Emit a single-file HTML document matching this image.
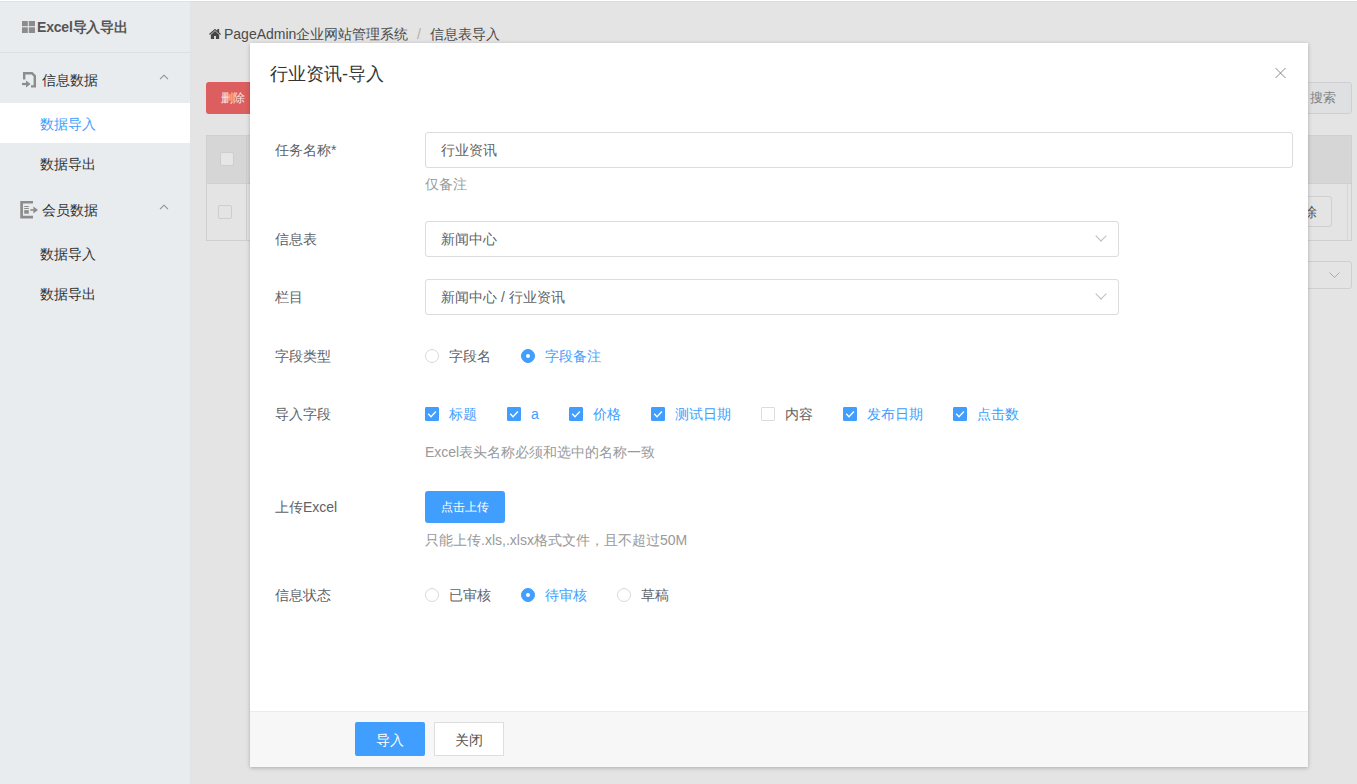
<!DOCTYPE html>
<html><head><meta charset="utf-8">
<style>
*{box-sizing:border-box;margin:0;padding:0}
html,body{width:1357px;height:784px;overflow:hidden}
body{font-family:"Liberation Sans",sans-serif;font-size:14px;color:#606266;background:#e4e4e4;position:relative}
.abs{position:absolute}
.t{position:absolute;white-space:nowrap;line-height:14px}
#topline{left:0;top:0;width:1357px;height:1px;background:#fff;z-index:5}
#side{left:0;top:0;width:191px;height:784px;background:#e8ecef;border-right:1px solid #e1e4e6}
#side .sep{left:0;top:52px;width:191px;height:1px;background:#dcdfe4}
#side .act{left:0;top:103px;width:190px;height:40px;background:#fff}
#side .t{color:#333}
#main{left:191px;top:0;width:1166px;height:784px;background:#e4e4e4}
#main .t{color:#4a4a4a}
#modal{left:250px;top:43px;width:1058px;height:724px;background:#fff;box-shadow:0 1px 4px rgba(0,0,0,.25)}
.lab{position:absolute;left:25px;white-space:nowrap;line-height:14px;color:#606266}
.inp{position:absolute;left:175px;border:1px solid #dcdcdc;border-radius:3px;background:#fff}
.inp .v{position:absolute;left:15px;top:10px;line-height:14px;white-space:nowrap;color:#606266}
.chev{position:absolute;right:13px;top:10px;width:8px;height:8px;border-right:1px solid #bdbdbd;border-bottom:1px solid #bdbdbd;transform:rotate(45deg)}
.help{position:absolute;left:175px;white-space:nowrap;line-height:14px;color:#999}
.row{position:absolute;left:175px;height:14px;display:flex;align-items:center;white-space:nowrap}
.radio{position:relative;flex:none;width:14px;height:14px;border:1px solid #d9d9d9;border-radius:50%;background:#fff}
.radio.on{border-color:#409eff;background:#409eff}
.radio.on:after{content:"";position:absolute;left:4px;top:4px;width:4px;height:4px;border-radius:50%;background:#fff}
.cb{position:relative;flex:none;width:14px;height:14px;border:1px solid #dcdcdc;border-radius:1px;background:#fff}
.cb.on{border-color:#409eff;background:#409eff}
.cb svg{position:absolute;left:0;top:0}
.opt{padding-left:10px;margin-right:30px;line-height:14px;color:#606266}
.opt.blue{color:#409eff}
#footer{left:0;top:668px;width:1058px;height:56px;background:#f7f7f7;border-top:1px solid #ebebeb}
.btn{position:absolute;text-align:center;white-space:nowrap}
</style></head><body>
<div id="topline" class="abs"></div>
<div class="abs" style="left:0;top:1px;width:1357px;height:1px;background:rgba(0,0,0,.035);z-index:5"></div>
<div id="side" class="abs">
  <div class="sep abs"></div>
  <div class="act abs"></div>
  <!-- grid icon -->
  <svg class="abs" style="left:22px;top:21px" width="13" height="12" viewBox="0 0 13 12"><g fill="#8c8c8c"><rect x="0" y="0" width="5.8" height="5.2"/><rect x="6.8" y="0" width="6.2" height="5.2"/><rect x="0" y="6.3" width="5.8" height="5.7"/><rect x="6.8" y="6.3" width="6.2" height="5.7"/></g></svg>
  <div class="t" style="left:37px;top:20px;font-weight:bold;color:#555;letter-spacing:-0.2px">Excel导入导出</div>
  <!-- import icon -->
  <svg class="abs" style="left:15px;top:65px" width="30" height="30" viewBox="0 0 30 30"><path d="M9.2 14.5V8.2H17L19.8 11V21.4H16" fill="none" stroke="#8c8c8c" stroke-width="2.4"/><path d="M7 19H12" stroke="#8c8c8c" stroke-width="2.2"/><path d="M11 15.6L15.6 19L11 22.4z" fill="#8c8c8c"/></svg>
  <div class="t" style="left:42px;top:73px">信息数据</div>
  <svg class="abs" style="left:159px;top:74px" width="10" height="6" viewBox="0 0 10 6"><path d="M1 5.2L5 1.2L9 5.2" fill="none" stroke="#8f8f8f" stroke-width="1.1"/></svg>
  <div class="t" style="left:40px;top:117px;color:#409eff">数据导入</div>
  <div class="t" style="left:40px;top:157px">数据导出</div>
  <!-- export icon -->
  <svg class="abs" style="left:15px;top:195px" width="30" height="30" viewBox="0 0 30 30"><path d="M18 7.25H6.6V22.2H18" fill="none" stroke="#8c8c8c" stroke-width="2.7"/><g fill="#8c8c8c"><rect x="9.2" y="11" width="4.6" height="1"/><rect x="9.2" y="13" width="4.6" height="1"/><rect x="9.2" y="15.1" width="4.6" height="3.6"/><rect x="15.3" y="14.2" width="3.5" height="1.6"/><path d="M18.4 11.5L23 15L18.4 18.5z"/></g></svg>
  <div class="t" style="left:42px;top:203px">会员数据</div>
  <svg class="abs" style="left:159px;top:204px" width="10" height="6" viewBox="0 0 10 6"><path d="M1 5.2L5 1.2L9 5.2" fill="none" stroke="#8f8f8f" stroke-width="1.1"/></svg>
  <div class="t" style="left:40px;top:247px">数据导入</div>
  <div class="t" style="left:40px;top:287px">数据导出</div>
</div>

<div id="main" class="abs">
  <!-- home icon -->
  <svg class="abs" style="left:18px;top:29px" width="12" height="10" viewBox="0 29 1664 1283" preserveAspectRatio="none"><path d="M1408 768v480q0 26-19 45t-45 19H960V928H704v384H320q-26 0-45-19t-19-45V768q0-1 .5-3t.5-3l575-474 575 474q1 2 1 6zm223-69-62 74q-8 9-21 11h-3q-13 0-21-7L832 200 140 777q-12 8-24 7-13-2-21-11l-62-74q-8-10-7-23.5T37 654L756 55q32-26 76-26t76 26l244 204V64q0-14 9-23t23-9h192q14 0 23 9t9 23v408l219 182q10 8 11 21.5t-7 23.5z" fill="#454545"/></svg>
  <div class="t" style="left:33px;top:27px">PageAdmin企业网站管理系统</div>
  <div class="t" style="left:226px;top:27px;color:#b0b0b0">/</div>
  <div class="t" style="left:239px;top:27px">信息表导入</div>
  <!-- red button -->
  <div class="abs" style="left:15px;top:82px;width:70px;height:32px;background:#dc5e5e;border-radius:3px"></div>
  <div class="t" style="left:30px;top:92px;font-size:12px;line-height:12px;color:#fbe9e9">删除</div>
  <!-- search button -->
  <div class="abs" style="left:1089px;top:82px;width:72px;height:32px;background:#dfe0e2;border:1px solid #cfcfd2;border-radius:3px"></div>
  <div class="t" style="left:1119px;top:91px;font-size:13px;line-height:14px;color:#808080">搜索</div>
  <!-- table -->
  <div class="abs" style="left:15px;top:135px;width:1146px;height:106px;border:1px solid #cfcfcf;background:#e4e4e4"></div>
  <div class="abs" style="left:16px;top:136px;width:1144px;height:48px;background:#d6d6d6;border-bottom:1px solid #cfcfcf"></div>
  <div class="abs" style="left:55px;top:135px;width:1px;height:105px;background:#cfcfcf"></div>
  <div class="abs" style="left:1156px;top:135px;width:1px;height:105px;background:#d6d6d6"></div>
  <div class="abs" style="left:29px;top:152px;width:14px;height:14px;border:1px solid #cdcdcd;background:#e6e6e6;border-radius:2px"></div>
  <div class="abs" style="left:27px;top:205px;width:14px;height:14px;border:1px solid #cdcdcd;background:#e4e4e4;border-radius:2px"></div>
  <div class="abs" style="left:1079px;top:196px;width:62px;height:31px;border:1px solid #cfcfcf;background:#e4e4e4;border-radius:3px"></div>
  <div class="t" style="left:1098px;top:205px;font-size:14px;line-height:14px;color:#555">删除</div>
  <!-- select -->
  <div class="abs" style="left:999px;top:261px;width:162px;height:28px;border:1px solid #cfcfcf;background:#e4e4e4;border-radius:3px"></div>
  <svg class="abs" style="left:1138px;top:272px" width="11" height="6" viewBox="0 0 11 6"><path d="M0.5 0.5l5 5 5-5" fill="none" stroke="#aaa" stroke-width="1"/></svg>
</div>

<div id="modal" class="abs">
  <div class="t" style="left:20px;top:22px;font-size:18px;line-height:18px;color:#333">行业资讯-导入</div>
  <svg class="abs" style="left:1025px;top:25px" width="11" height="10" viewBox="0 0 11 10"><path d="M0.5 0l10 10M10.5 0l-10 10" stroke="#8a8a8a" stroke-width="1"/></svg>

  <div class="lab" style="top:100px">任务名称*</div>
  <div class="inp" style="top:89px;width:868px;height:36px"><div class="v">行业资讯</div></div>
  <div class="help" style="top:134px">仅备注</div>

  <div class="lab" style="top:189px">信息表</div>
  <div class="inp" style="top:178px;width:694px;height:36px"><div class="v">新闻中心</div><div class="chev"></div></div>

  <div class="lab" style="top:247px">栏目</div>
  <div class="inp" style="top:236px;width:694px;height:36px"><div class="v">新闻中心 / 行业资讯</div><div class="chev"></div></div>

  <div class="lab" style="top:306px">字段类型</div>
  <div class="row" style="top:306px">
    <span class="radio"></span><span class="opt">字段名</span>
    <span class="radio on"></span><span class="opt blue">字段备注</span>
  </div>

  <div class="lab" style="top:364px">导入字段</div>
  <div class="row" style="top:364px">
    <span class="cb on"><svg width="12" height="12" viewBox="0 0 12 12"><path d="M2.2 5.8l2.8 2.9 4.9-5.2" stroke="#fff" stroke-width="1.3" fill="none"/></svg></span><span class="opt blue">标题</span>
    <span class="cb on"><svg width="12" height="12" viewBox="0 0 12 12"><path d="M2.2 5.8l2.8 2.9 4.9-5.2" stroke="#fff" stroke-width="1.3" fill="none"/></svg></span><span class="opt blue">a</span>
    <span class="cb on"><svg width="12" height="12" viewBox="0 0 12 12"><path d="M2.2 5.8l2.8 2.9 4.9-5.2" stroke="#fff" stroke-width="1.3" fill="none"/></svg></span><span class="opt blue">价格</span>
    <span class="cb on"><svg width="12" height="12" viewBox="0 0 12 12"><path d="M2.2 5.8l2.8 2.9 4.9-5.2" stroke="#fff" stroke-width="1.3" fill="none"/></svg></span><span class="opt blue">测试日期</span>
    <span class="cb"></span><span class="opt">内容</span>
    <span class="cb on"><svg width="12" height="12" viewBox="0 0 12 12"><path d="M2.2 5.8l2.8 2.9 4.9-5.2" stroke="#fff" stroke-width="1.3" fill="none"/></svg></span><span class="opt blue">发布日期</span>
    <span class="cb on"><svg width="12" height="12" viewBox="0 0 12 12"><path d="M2.2 5.8l2.8 2.9 4.9-5.2" stroke="#fff" stroke-width="1.3" fill="none"/></svg></span><span class="opt blue">点击数</span>
  </div>
  <div class="help" style="top:402px">Excel表头名称必须和选中的名称一致</div>

  <div class="lab" style="top:457px">上传Excel</div>
  <div class="btn" style="left:175px;top:448px;width:80px;height:32px;background:#409eff;border-radius:3px;color:#fff;font-size:12px;line-height:32px">点击上传</div>
  <div class="help" style="top:490px">只能上传.xls,.xlsx格式文件，且不超过50M</div>

  <div class="lab" style="top:545px">信息状态</div>
  <div class="row" style="top:545px">
    <span class="radio"></span><span class="opt">已审核</span>
    <span class="radio on"></span><span class="opt blue">待审核</span>
    <span class="radio"></span><span class="opt">草稿</span>
  </div>

  <div id="footer" class="abs">
    <div class="btn" style="left:105px;top:10px;width:70px;height:34px;background:#409eff;border-radius:2px;color:#fff;line-height:34px;padding-top:1px">导入</div>
    <div class="btn" style="left:184px;top:10px;width:70px;height:34px;background:#fff;border:1px solid #dedede;color:#555;line-height:32px;padding-top:1px">关闭</div>
  </div>
</div>
</body></html>
